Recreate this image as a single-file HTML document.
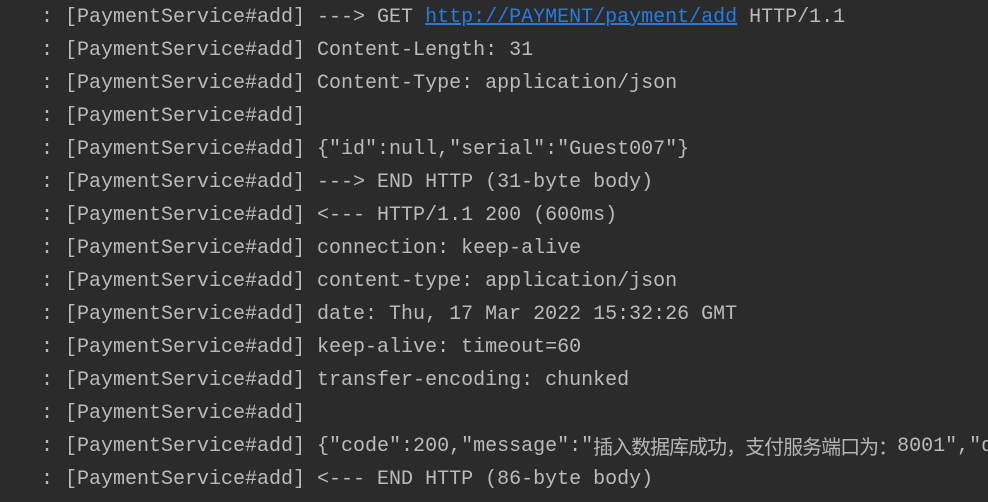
<!DOCTYPE html>
<html><head><meta charset="utf-8"><style>
html,body{margin:0;padding:0;background:#2b2b2b;width:988px;height:502px;overflow:hidden}
.w{padding:1px 0 0 41px;font-family:"Liberation Mono",monospace;font-size:20px;color:#bbbbbb;width:947px;overflow:hidden}
.w div{height:33px;line-height:33px;white-space:pre;overflow:hidden}
a{color:#287bde;text-decoration:underline}
.c{font-family:"Noto Sans CJK SC",sans-serif;color:#b5b5b5;line-height:20px;display:inline-block;vertical-align:top;margin-top:6px;letter-spacing:-1px}
</style></head><body><div class="w">
<div>: [PaymentService#add] ---&gt; GET <a>http://PAYMENT/payment/add</a> HTTP/1.1</div>
<div>: [PaymentService#add] Content-Length: 31</div>
<div>: [PaymentService#add] Content-Type: application/json</div>
<div>: [PaymentService#add]</div>
<div>: [PaymentService#add] {"id":null,"serial":"Guest007"}</div>
<div>: [PaymentService#add] ---&gt; END HTTP (31-byte body)</div>
<div>: [PaymentService#add] &lt;--- HTTP/1.1 200 (600ms)</div>
<div>: [PaymentService#add] connection: keep-alive</div>
<div>: [PaymentService#add] content-type: application/json</div>
<div>: [PaymentService#add] date: Thu, 17 Mar 2022 15:32:26 GMT</div>
<div>: [PaymentService#add] keep-alive: timeout=60</div>
<div>: [PaymentService#add] transfer-encoding: chunked</div>
<div>: [PaymentService#add]</div>
<div>: [PaymentService#add] {"code":200,"message":"<span class="c">插入数据库成功，支付服务端口为：</span>8001","data":1}</div>
<div>: [PaymentService#add] &lt;--- END HTTP (86-byte body)</div>
</div></body></html>
